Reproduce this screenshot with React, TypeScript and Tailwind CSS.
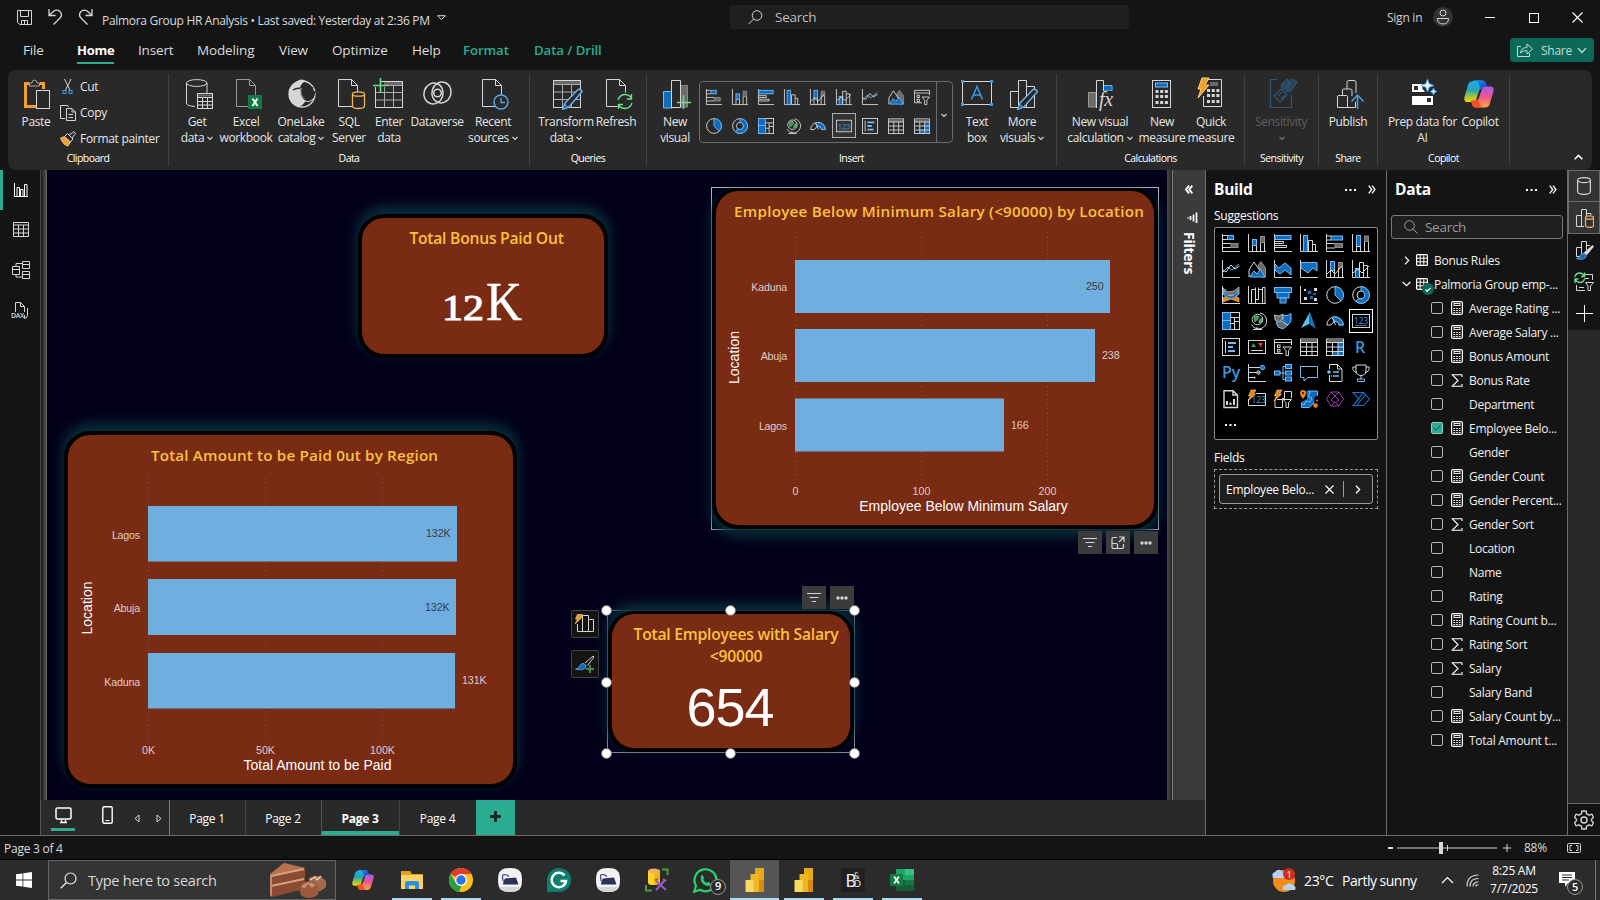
import React, { ReactNode } from "react";

const W = "#d6d6d6";
const B = "#0f6cbd";
const L = "#74b9f2";
const G = "#6a6a6a";

type SvgProps = { w: number; h?: number; vb?: string; children: ReactNode; className?: string };
const Svg = ({ w, h, vb, children, className }: SvgProps) => (
  <svg width={w} height={h ?? w} viewBox={vb ?? `0 0 ${w} ${h ?? w}`} fill="none" className={`block shrink-0 ${className ?? ""}`}>
    {children}
  </svg>
);

/* ---------- small visual-type icons, drawn on an 18x18 grid ---------- */
const axis = <path d="M.5 0V17.5H18" stroke={W} />;
const visual: Record<string, ReactNode> = {
  stackedBar: (
    <>
      {axis}
      <path d="M.5 1.500H5M.5 5.500H5M.5 9.500H9M.5 13.500H9" stroke={W} />
      <rect x="5.500" y="1.500" width="6" height="4" fill={B} stroke={L} />
      <rect x="9" y="9.500" width="7" height="4" fill={G} stroke="#8a8a8a" />
    </>
  ),
  stackedCol: (
    <>
      {axis}
      <path d="M4.500 17V11.500H8.500V17M12.500 17V8.500H16.500V17" stroke={W} />
      <rect x="4.500" y="5.500" width="4" height="6" fill={B} stroke={L} />
      <rect x="12.500" y="2.500" width="4" height="6" fill={G} stroke="#8a8a8a" />
    </>
  ),
  clusterBar: (
    <>
      {axis}
      <rect x="1" y="1.500" width="16" height="4" fill={B} stroke={L} />
      <path d="M1 9.500H9.500V7.500H1M1 13.500H12.500V11.500H1" stroke={W} />
    </>
  ),
  clusterCol: (
    <>
      {axis}
      <rect x="3.500" y="1.500" width="4" height="16" fill={B} stroke={L} />
      <path d="M8.500 17V6.500H12.500V17M12.500 10.500H15.500V17" stroke={W} />
    </>
  ),
  fullBar: (
    <>
      {axis}
      <rect x="5" y="2" width="11.500" height="4" fill={B} stroke={L} />
      <path d="M.5 2H5M.5 6H5M.5 9.500H9M.5 14H9" stroke={W} />
      <rect x="9" y="9.500" width="7.500" height="4" fill={G} stroke="#8a8a8a" />
    </>
  ),
  fullCol: (
    <>
      {axis}
      <rect x="4.500" y="1.500" width="4" height="11" fill={B} stroke={L} />
      <path d="M4.500 17V12.500H8.500V17M12.500 17V7.500H16.500V17" stroke={W} />
      <rect x="12.500" y="2" width="4" height="5.500" fill={G} stroke="#8a8a8a" />
    </>
  ),
  line: (
    <>
      {axis}
      <path d="M1 12L6 7L10 10L17 4" stroke={L} />
      <path d="M1 10L4 12L9 5L13 9L17.500 6" stroke={W} />
    </>
  ),
  area: (
    <>
      <path d="M10 5L13 1.500L17.500 8V17H14Z" fill={G} stroke="#8a8a8a" />
      <path d="M1 17V10L6 2L12 11" stroke={W} />
      <path d="M1.500 17L6 11L9 14L12.500 9L17 17Z" fill={B} stroke={L} />
    </>
  ),
  areaStack: (
    <>
      {axis}
      <path d="M1 4L5 8L11 3L17 8V15L11 10L6 14L1 10Z" fill={B} stroke={L} />
    </>
  ),
  area100: (
    <>
      {axis}
      <path d="M1 2.500H17V11L13 8L8 13L1 8Z" fill={B} stroke={L} />
    </>
  ),
  comboStack: (
    <>
      {axis}
      <rect x="4.500" y="1.500" width="4" height="9" fill={B} stroke={L} />
      <path d="M4.500 17V9.500M8.500 17V9.500M12.500 17V7.500H16.500V17" stroke={W} />
      <rect x="12.500" y="2.500" width="4" height="5" fill={G} stroke="#8a8a8a" />
      <path d="M1 14L5 10L9 14L16.500 5.500" stroke={W} />
    </>
  ),
  combo: (
    <>
      {axis}
      <rect x="3.500" y="8.500" width="4" height="9" fill={B} stroke={L} />
      <path d="M7.500 17V2.500H11.500V17M12 5.500H15.500V17" stroke={W} />
      <path d="M1 13L6 9L10 13L17 6" stroke={W} />
    </>
  ),
  ribbon: (
    <>
      <path d="M1 2L6 6L12 5L17 1V8L12 12L6 11L1 8Z" fill={G} stroke={W} strokeWidth=".7" />
      <path d="M1 12L6 9H12L17 12V16L9 13L1 16Z" fill="#e8811a" stroke="#ffc37a" strokeWidth=".6" />
      <path d="M2 4C5 12 12 12 16 4V8C12 14 6 14 2 8Z" fill={B} stroke={L} strokeWidth=".7" />
      <path d="M.5 0V17.500H18" stroke={W} />
    </>
  ),
  waterfall: (
    <>
      {axis}
      <path d="M3.500 17V3.500H7.500V17M7.500 1.500V13.500H10.500V1.500M10.500 3.500H14.500V1.500H17V17M14.500 3V17" stroke={W} />
    </>
  ),
  funnel: (
    <>
      <rect x=".5" y="1.500" width="17" height="5" fill={B} stroke={L} />
      <rect x="3" y="6.500" width="12" height="5.500" fill={B} stroke={L} />
      <rect x="6" y="12" width="6" height="5" fill={B} stroke={L} />
    </>
  ),
  scatter: (
    <>
      {axis}
      <path d="M4 11h3v3H4zM14 12h3v3h-3zM14 2h3v3h-3zM4 3h2v2H4z" fill={W} />
      <path d="M8 5h3v3H8zM10 10h3v3h-3zM13 7h3v2h-3z" fill={B} />
    </>
  ),
  pie: (
    <>
      <circle cx="9" cy="9" r="8.300" stroke={W} />
      <path d="M9 9V.7A8.300 8.300 0 0 1 14.800 15Z" fill={B} stroke={L} />
    </>
  ),
  donut: (
    <>
      <circle cx="9" cy="9" r="8.300" stroke={W} />
      <circle cx="9" cy="9" r="4" stroke={W} />
      <path d="M9 .7A8.300 8.300 0 1 1 4 15.500L6.500 12.300A4 4 0 1 0 9 5Z" fill={B} stroke={L} />
    </>
  ),
  treemap: (
    <>
      <rect x=".5" y=".5" width="17" height="17" stroke={W} />
      <rect x=".5" y=".5" width="8" height="8" fill={B} stroke={L} />
      <rect x=".5" y="8.500" width="8" height="9" fill={B} stroke={L} />
      <path d="M8.500 5.500H17.500M12.500 5.500V17.500M8.500 11.500H12.500M12.500 9.500H17.500" stroke={W} />
    </>
  ),
  globe: (
    <>
      <circle cx="9.500" cy="7.500" r="5.300" stroke={W} />
      <path d="M6 5Q8 3 10 4T9 8T6.500 9ZM11 8L14 6V10L11 11Z" fill="#3b9c5a" stroke="#9be0ae" strokeWidth=".5" />
      <path d="M12 1A8 8 0 1 1 3.500 12.500M9 15V17M5 17.500H14" stroke={W} />
    </>
  ),
  filledMap: (
    <>
      <path d="M.5 3L5 4L9 2L8 8L5 10L1 8Z" fill={G} stroke={W} strokeWidth=".8" />
      <path d="M9 3Q13 5 17 1.500V9L14 13L11 11L9 8Z" fill={B} stroke={L} />
      <path d="M2 10L8 9L11 12L14 13L9 17L4 15Z" fill={G} stroke={L} />
    </>
  ),
  azureMap: (
    <>
      <path d="M10 0L1 16L9 12Z" fill="#5cc3ea" />
      <path d="M10 0L16 17L9 12Z" fill="#1a73b8" />
    </>
  ),
  gauge: (
    <>
      <path d="M.8 13A8.200 8.200 0 0 1 17.200 13H13A4 4 0 0 0 8 9.500L5 13Z" stroke={W} />
      <path d="M6 5.500A8.200 8.200 0 0 1 17.200 13H13A4 4 0 0 0 8.500 9.200Z" fill={B} stroke={L} />
      <path d="M6.500 6.500L9.500 13" stroke={W} />
    </>
  ),
  card: (
    <>
      <rect x=".5" y="2.500" width="17" height="13" stroke={W} />
      <text x="9" y="12.300" textAnchor="middle" fontSize="8.500" fill="#3a9be8" fontFamily="Open Sans, sans-serif">123</text>
      <path d="M3 13.500H15" stroke={G} />
    </>
  ),
  multiRow: (
    <>
      <rect x=".5" y=".5" width="17" height="17" stroke={W} />
      <path d="M3.500 3V15" stroke={W} />
      <path d="M6 5H14M6 9H11M6 13H13" stroke={L} strokeWidth="2" />
    </>
  ),
  kpi: (
    <>
      <rect x=".5" y="2.500" width="17" height="13" stroke={W} />
      <path d="M3 9L5.500 5L8 9Z" fill="#2f9e4f" />
      <path d="M10 5H15L12.500 9.500Z" fill="#e33" />
      <path d="M3 12.500H15" stroke={W} />
    </>
  ),
  slicer: (
    <>
      <path d="M9 15.500H.5V1.500H17.500V7M.5 4.500H17.500" stroke={W} />
      <rect x="3.500" y="7" width="2.500" height="2.500" stroke={W} />
      <rect x="3.500" y="11.500" width="2.500" height="2.500" stroke={W} />
      <path d="M9 9H17.500L14.500 12.500V17.500H12V12.500Z" stroke={W} />
    </>
  ),
  table: (
    <>
      <rect x=".5" y="1" width="17" height="16.500" stroke={W} />
      <rect x="1" y="1.500" width="16" height="3" fill={G} />
      <path d="M.5 4.500H17.500M.5 9H17.500M.5 13.500H17.500M6.500 4.500V17.500M12 4.500V17.500" stroke={W} />
    </>
  ),
  matrix: (
    <>
      <path d="M12 5H17.500V17.500H6.500V13H12Z" fill={B} />
      <rect x=".5" y="1" width="17" height="16.500" stroke={W} />
      <rect x="1" y="1.500" width="16" height="3" fill={G} />
      <path d="M.5 4.500H17.500M.5 9H17.500M.5 13.500H17.500M6.500 4.500V17.500M12 4.500V17.500" stroke={W} />
    </>
  ),
  r: <text x="8" y="15" textAnchor="middle" fontSize="16" fontWeight="600" fill="#3a96dd" fontFamily="Open Sans, sans-serif">R</text>,
  py: <text x="9" y="14" textAnchor="middle" fontSize="16" fontWeight="600" fill="#3a96dd" fontFamily="Open Sans, sans-serif" letterSpacing="-.3">Py</text>,
  influencers: (
    <>
      {axis}
      <path d="M1 3.500H12M1 8.500H9M1 13.500H6" stroke={W} />
      <circle cx="14.500" cy="3.500" r="2.200" fill={B} stroke={L} />
      <circle cx="10.500" cy="8.500" r="1.700" fill={G} stroke={W} />
      <circle cx="6.500" cy="13.500" r="1" fill={W} />
    </>
  ),
  decomp: (
    <>
      <path d="M6 9H9V2.500H12M9 9H12M9 9V15.500H12" stroke={L} />
      <rect x=".5" y="7" width="5.500" height="4" fill={B} stroke={L} />
      <rect x="11.500" y=".5" width="6" height="4" fill={B} stroke={L} />
      <rect x="11.500" y="7" width="6" height="4" fill={B} stroke={L} />
      <rect x="11.500" y="13" width="6" height="4" fill={B} stroke={L} />
    </>
  ),
  qna: <path d="M.5 2.500H17.500V13.500H8L4 17V13.500H.5Z" stroke={L} />,
  narrative: (
    <>
      <path d="M3.500 5V.5H11.500L16 5V17.500H3.500V11M11.500 .5V5H16" stroke={W} />
      <circle cx="3" cy="8" r="1.800" fill={L} />
      <path d="M7 8H13M7 12H13M5 12H6" stroke={L} strokeWidth="1.300" />
    </>
  ),
  trophy: (
    <>
      <path d="M4 1H14V7Q14 11 9 11.500Q4 11 4 7ZM4 3H.8Q.5 8 5 8.500M14 3H17.200Q17.500 8 13 8.500M9 11.500V15" stroke={W} />
      <path d="M5.500 15H12.500V17.500H5.500Z" stroke={L} />
    </>
  ),
  paginated: (
    <>
      <path d="M2 .8H11L15.500 5V17.500H2ZM11 .8V5H15.500" stroke={W} strokeWidth="1.400" />
      <path d="M5 15V11M8.500 15V12.500M12 15V9" stroke={W} strokeWidth="2" />
    </>
  ),
  cardNew: (
    <>
      <path d="M6 15.500H.5V9M8 3.500H17.500V15.500H5" stroke={W} />
      <text x="10.500" y="13" textAnchor="middle" fontSize="8.500" fill="#3a9be8" fontFamily="Open Sans, sans-serif">123</text>
      <path d="M3 0H8L5.500 4H7.500L0 11L2.500 6H.5Z" fill="#e8811a" stroke="#ffd08a" strokeWidth=".6" />
    </>
  ),
  slicerNew: (
    <>
      <path d="M10.500 1.500H17.500V8M8 8.500H10.500V1.500M1 10V17.500H8.500V9.500H3M9 9.500H17.500L14.500 12.500V17.500H12V12.500Z" stroke={W} />
      <path d="M3 0H8L5.500 4H7.500L0 11L2.500 6H.5Z" fill="#e8811a" stroke="#ffd08a" strokeWidth=".6" />
    </>
  ),
  arcgis: (
    <>
      <path d="M6 1H17V5L14 8L15 12L10 17H1V12L7 9Z" fill={B} />
      <path d="M8 1L10 3L8 6L12 8L10 12L6 11L4 15L1.500 13V17.500H9L14 13M8 1H17.500V6" stroke={L} />
      <path d="M3 0A3 3 0 0 1 6 3Q6 6 3 9Q0 6 0 3A3 3 0 0 1 3 0Z" fill="#f08018" />
      <circle cx="3" cy="3" r="1.100" fill="#111" />
      <circle cx="15.500" cy="15.500" r="2.300" fill="#f08018" />
      <circle cx="17" cy="10.500" r="1" fill="#f08018" />
    </>
  ),
  powerApps: <path d="M5 2L9 6L13 2L17.500 9L13 16L9 12L5 16L.5 9ZM5 2H13M5 16H13M9 6L5 10L9 13L13 10Z" stroke="#9b3fb0" />,
  automate: <path d="M1 2.500H11.500L17.500 9L11.500 15.500H1L7 9ZM5 15L13.500 5M1 15.500L11.500 2.500" stroke="#1473d6" strokeWidth="1.100" />,
};
const V = ({ n, s = 18 }: { n: string; s?: number }) => (
  <Svg w={s} vb="0 0 18 18" className="overflow-visible">
    {visual[n]}
  </Svg>
);

const Chev = ({ c = W }: { c?: string }) => (
  <svg width="6" height="5" viewBox="0 0 6 5" fill="none" className="ml-[3px] inline-block align-[1px]">
    <path d="M.5 1L3 3.500L5.500 1" stroke={c} strokeWidth="1.100" />
  </svg>
);

const Copilot = ({ s, id }: { s: number; id: string }) => (
  <Svg w={s} h={s} vb="0 0 30 28">
    <defs>
      <linearGradient id={`${id}a`} x1="0" y1="0" x2="0" y2="1">
        <stop offset="0" stopColor="#18b5f0" />
        <stop offset=".45" stopColor="#2aa3b8" />
        <stop offset=".7" stopColor="#8bc34a" />
        <stop offset="1" stopColor="#ffd500" />
      </linearGradient>
      <linearGradient id={`${id}b`} x1="0" y1="0" x2="0" y2="1">
        <stop offset="0" stopColor="#a45bf0" />
        <stop offset=".5" stopColor="#f0568a" />
        <stop offset="1" stopColor="#ffa64d" />
      </linearGradient>
      <linearGradient id={`${id}c`} x1="0" y1="0" x2="1" y2="1">
        <stop offset="0" stopColor="#1592f0" />
        <stop offset="1" stopColor="#1b3bd0" />
      </linearGradient>
    </defs>
    <path d="M8 1.500Q9 .5 11 .5H18Q21 .5 22 4L23 8H19Q16 8 15 11L12 20Q11 22 8 22H4Q-.5 22 .5 17L4 5Q5 1.500 8 1.500Z" fill={`url(#${id}a)`} />
    <path d="M11 .5H18Q21 .5 22 4L23.500 8.500H19Q16 8.500 15 5Q14 1 11 .5Z" fill={`url(#${id}c)`} />
    <path d="M22 6.500H26Q30.500 6.500 29.500 11L26 23Q25 27.500 21 27.500H12Q9 27.500 8 24L7 20.500H11Q14 20.500 15 17.500L18 9Q19 6.500 22 6.500Z" fill={`url(#${id}b)`} />
    <path d="M7 20.500H12Q14 20.500 14.500 19Q15 27 20 27.500H12Q9 27.500 8 24Z" fill="#f4511e" />
  </Svg>
);

/* ---------- ribbon ---------- */
const page = "M3.500 .5H16.500L22.500 6.500V27.500H3.500ZM16.500 .5V6.500H22.500";
const big: Record<string, ReactNode> = {
  paste: (
    <>
      <path d="M6 4.500H2.500V27.500H13M17 4.500H20.500V10" stroke="#f0a030" strokeWidth="3" />
      <path d="M6.500 7V4H9Q9 1 11.500 1T14 4H16.500V7Z" stroke="#a9a9a9" fill="#292929" />
      <rect x="13.500" y="11.500" width="13" height="18" fill="#292929" stroke={W} />
    </>
  ),
  get: (
    <>
      <path d="M1.500 4V24Q1.500 27 10 27.500M22 4V14" stroke={W} />
      <ellipse cx="11.700" cy="4" rx="10.200" ry="3.400" stroke={W} />
      <rect x="12.500" y="14.500" width="15" height="15" fill="#292929" stroke={W} />
      <path d="M13 16.500H27" stroke={G} strokeWidth="2" />
      <path d="M12.500 18.500H27.500M12.500 22.500H27.500M12.500 26H27.500M17.500 18V29.500M22.500 18V29.500" stroke={W} />
    </>
  ),
  excel: (
    <>
      <path d={page} stroke="#999" />
      <rect x="15" y="16" width="14" height="14" fill="#107c41" />
      <path d="M19.500 19.500L24.500 27M24.500 19.500L19.500 27" stroke="#fff" strokeWidth="1.900" />
    </>
  ),
  onelake: (
    <>
      <circle cx="15" cy="15" r="13" stroke={W} strokeWidth="1.300" />
      <path d="M8 4Q14 -2 19 2Q14 4 13 9L15 16L19 21Q15 29 10 27Q1 24 2 13Q3 8 8 4Z" fill={W} />
      <path d="M14 8Q12 18 20 22Q27 20 28 12M6 11Q11 8 14 10M15 9Q20 6 26 9" stroke="#292929" strokeWidth="1.400" />
      <path d="M14 9Q12 17 18 22Q23 24 27 19" stroke={W} />
    </>
  ),
  sql: (
    <>
      <path d={page} stroke={W} />
      <path d="M17.500 15V27Q17.500 29.500 23.500 29.500T29.500 27V15" fill="#292929" stroke="#f2b45c" strokeWidth="1.300" />
      <ellipse cx="23.500" cy="15" rx="6" ry="2.200" fill="#292929" stroke="#f2b45c" strokeWidth="1.300" />
    </>
  ),
  enter: (
    <>
      <rect x="2.500" y="2.500" width="27" height="26" stroke={W} />
      <rect x="11" y="3" width="18" height="3" fill={G} />
      <path d="M9 6.500H29.500M2.500 13.500H29.500M2.500 21H29.500M11.500 8V28.500M20.500 6.500V28.500" stroke="#aaa" />
      <path d="M0 0H7V8H0Z" fill="#292929" />
      <path d="M0 6.500H15M7.500 -1V14" stroke="#6fe08a" strokeWidth="1.600" />
    </>
  ),
  dataverse: (
    <>
      <ellipse cx="11.500" cy="15.500" rx="9.500" ry="10.500" transform="rotate(18 11.500 15.500)" stroke={W} strokeWidth="1.500" />
      <ellipse cx="19.500" cy="14.500" rx="9.500" ry="10.500" transform="rotate(18 19.500 14.500)" stroke={W} strokeWidth="1.500" />
      <circle cx="15.500" cy="15" r="3.800" stroke={W} strokeWidth="1.500" />
    </>
  ),
  recent: (
    <>
      <path d={page} stroke={W} />
      <circle cx="22" cy="23" r="7" fill="#292929" stroke="#5aa9e6" strokeWidth="1.400" />
      <path d="M22 18.500V23.500H26" stroke="#5aa9e6" strokeWidth="1.300" />
    </>
  ),
  transform: (
    <>
      <rect x="1.500" y="1.500" width="27" height="27" stroke={W} />
      <rect x="2" y="2" width="26" height="3.500" fill={G} />
      <path d="M1.500 5.500H28.500M1.500 13H28.500M1.500 20.500H28.500M10.500 5.500V28.500M19.500 5.500V28.500" stroke="#aaa" />
      <path d="M11 30L13 24L26 10.500Q29 9.500 30 12.500L17 28Z" fill="#292929" stroke={L} strokeWidth="1.400" />
      <path d="M10.500 30.500L12.500 25L16 28.500Z" fill={B} stroke={L} />
    </>
  ),
  refresh: (
    <>
      <path d={page} stroke={W} />
      <circle cx="22" cy="22.500" r="9" fill="#292929" />
      <path d="M15 21Q17 15.500 22 15.500Q26 15.500 28.500 19M28.500 15V20H24M29 24Q27 29.500 22 29.500Q18 29.500 15.500 26M15.500 30V25.500H20" stroke="#6fe08a" strokeWidth="1.400" />
    </>
  ),
  newVisual: (
    <>
      <path d="M1.500 29V12.500H10.500V29Z" fill={B} stroke={L} />
      <path d="M18 6.500H25.500V28H18Z" fill={G} stroke="#888" />
      <path d="M9.500 28.500V1.500H18.500V28.500Z" fill="#292929" stroke={W} />
      <path d="M21.500 16V30M15 23.500H29" stroke="#6fe08a" strokeWidth="1.500" />
    </>
  ),
  textBox: (
    <>
      <rect x="1.500" y="3.500" width="29" height="23" stroke={W} />
      <path d="M0 2h3v3H0zM29 2h3v3h-3zM0 25h3v3H0zM29 25h3v3h-3z" fill="#3a9be8" />
      <path d="M10.500 21.500L16 8.500L21.500 21.500M12.500 17H19.500" stroke="#3a9be8" strokeWidth="1.500" />
    </>
  ),
  moreVisuals: (
    <>
      <path d="M1.500 28.500V12.500H9.500V28.500ZM9.500 28.500V1.500H17.500V28.500ZM17.500 7.500H25.500V28.500H10" stroke={W} />
      <path d="M9 30L11 24L24 10.500Q27 9.500 28.500 12.500L15 28Z" fill="#292929" stroke={L} strokeWidth="1.400" />
      <path d="M8.500 30.500L10.500 25L14 28.500Z" fill={B} stroke={L} />
    </>
  ),
  newCalc: (
    <>
      <path d="M3.500 28V13.500H11V28Z" fill={G} stroke="#999" />
      <path d="M18 6.500H27V12H18Z" fill={B} stroke={L} />
      <path d="M11.500 29V1.500H18.500V29" fill="#292929" stroke={W} />
      <path d="M16 12H32V32H16Z" fill="#292929" />
      <text x="14" y="27" fontSize="20" fontStyle="italic" fill={W} fontFamily="Liberation Serif, serif">fx</text>
    </>
  ),
  measure: (
    <>
      <rect x="6.500" y="1.500" width="18" height="27" stroke={W} />
      <rect x="9.500" y="4" width="12" height="4" fill={B} stroke={L} />
      <path d="M9.500 12.500H22M9.500 17.500H22M9.500 23.500H22" stroke={W} strokeWidth="3" strokeDasharray="3 1.700" />
    </>
  ),
  quick: (
    <>
      <path d="M12 1.500H26.500V28.500H8.500V18" stroke={W} />
      <rect x="15" y="4" width="8" height="4" fill={G} />
      <path d="M12 12.500H25M12 17.500H25M12 23.500H25" stroke={W} strokeWidth="3" strokeDasharray="3 1.700" />
      <path d="M7 0H14L10 7H14L3 20L6 11H3Z" fill="#ef9f22" stroke="#ffd08a" />
    </>
  ),
  sensitivity: (
    <g stroke="#2f5673" strokeWidth="1.200">
      <path d="M12 1.500H5.500V29.500H26.500V17" />
      <path d="M9 18L16 11L22 17L15 24ZM13 18L17 14M16 21L20 17" />
      <path d="M16 8L22 1L25 4L19 12ZM24 7L27 1L32 4L26 13L21 14Z" fill="#27465c" />
    </g>
  ),
  publish: (
    <>
      <path d="M2.500 28.500V17.500Q2.500 16.500 4 16.500H7.500V11Q7.500 10 8.500 10H12V3.500Q12 1.500 14 1.500H19Q21 1.500 21 3.500V14M7.500 16.500H11.500Q12.500 16.500 12.500 17.500V28.500M12 10H15.500Q17 10 17 12V17M2.500 28.500H20.500V23" stroke={W} />
      <path d="M22.500 30V17M16.500 22.500L22.500 16L28.500 22.500" stroke="#4ba0e0" strokeWidth="1.500" />
    </>
  ),
  prep: (
    <>
      <path d="M5 5H18L15 9L18 13H5ZM5 17H26V26H5Z" fill="#fff" />
      <path d="M7 7H11V11H7ZM20 19H24V23H20Z" fill="#333" />
      <path d="M20.500 0L22.300 4.700L27 6.500L22.300 8.300L20.500 13L18.700 8.300L14 6.500L18.700 4.700ZM26.500 9L27.600 11.400L30 12.500L27.600 13.600L26.500 16L25.400 13.600L23 12.500L25.400 11.400Z" fill="#e8f4fc" stroke="#3a9be8" strokeWidth=".9" />
    </>
  ),
};
/* view boxes that nudge each drawing inside its 32px cell */
const bigVb: Record<string, string> = {
  paste: "-3 -1 32 32", get: "-4 -1 32 32", excel: "-3 -1 32 32", onelake: "-2 -1 32 32", sql: "-2 -1 32 32",
  enter: "0 -1 32 32", dataverse: "-1 0 32 32", recent: "-2 -1 32 32", transform: "-2 -1 32 32", refresh: "-3 -1 32 32",
  newVisual: "-3 -1 32 32", textBox: "0 0 32 32", moreVisuals: "-3 -1 32 32", newCalc: "-1 -1 32 32", measure: "0 -1 32 32",
  quick: "0 0 32 32", sensitivity: "0 0 32 32", publish: "-3 -1 32 32", prep: "0 -1 32 32",
};

type BtnProps = { icon: string; w: string; a: string; b?: string; drop?: boolean; off?: boolean };
const Btn = ({ icon, w, a, b, drop, off }: BtnProps) => (
  <div className={`flex shrink-0 flex-col items-center whitespace-nowrap ${w} ${off ? "text-[#5e5e5e]" : "text-[#e6e6e6]"}`}>
    <div className="mb-[4px] flex h-[33px] w-[32px] items-end justify-center">
      {icon === "copilot" ? (
        <div className="mb-px mr-[2px]"><Copilot s={30} id="cr" /></div>
      ) : (
        <Svg w={32} vb={bigVb[icon]} className="overflow-visible">{big[icon]}</Svg>
      )}
    </div>
    <div className="text-center text-[12px] leading-[16px] tracking-[-0.35px]">
      {a}
      {(b !== undefined || off) && <br />}
      {b}
      {drop && <Chev c={off ? "#777" : W} />}
    </div>
  </div>
);

const Group = ({ label, w, children, pad = "" }: { label: string; w: string; children: ReactNode; pad?: string }) => (
  <div className={`flex h-[92px] shrink-0 flex-col border-r border-[#414141] ${w}`}>
    <div className={`flex h-[74px] shrink-0 pt-[3px] ${pad}`}>{children}</div>
    <div className="text-center text-[10.5px] font-medium leading-[21px] tracking-[-0.55px] text-white">{label}</div>
  </div>
);

const gallery = [
  ["stackedBar", "stackedCol", "clusterBar", "clusterCol", "comboStack", "combo", "line", "area", "slicer"],
  ["pie", "donut", "treemap", "globe", "gauge", "card", "multiRow", "table", "matrix"],
];

const Ribbon = () => (
  <div className="mx-[8px] flex h-[100px] shrink-0 rounded-[8px] bg-[#292929] pt-[4px]">
    <Group label="Clipboard" w="w-[161px]" pad="pl-[10px]">
      <Btn icon="paste" w="w-[36px]" a="Paste" />
      <div className="-mt-[3px] ml-[6px] flex flex-col text-[12px] leading-[26px] tracking-[-0.3px] text-[#e6e6e6]">
        <div className="flex h-[26px] items-center gap-[4px]">
          <Svg w={16}>
            <path d="M4.500 0L10 11M11 0L5.500 11" stroke={W} />
            <rect x="3" y="11.500" width="3" height="3" stroke="#3a9be8" /><rect x="9" y="11.500" width="3" height="3" stroke="#3a9be8" />
          </Svg>
          Cut
        </div>
        <div className="flex h-[26px] items-center gap-[4px]">
          <Svg w={16}>
            <path d="M5 13.500H.5V.5H7.500L9 2" stroke={W} />
            <path d="M6.500 3.500H12L15.500 7V15.500H6.500ZM12 3.500V7H15.500M8.500 9.500H13M8.500 12.500H13" stroke={W} />
          </Svg>
          Copy
        </div>
        <div className="flex h-[26px] items-center gap-[4px]">
          <Svg w={16}>
            <path d="M.5 7L6 5L11 10L8 15Q3 14 .5 7Z" fill="#f0a030" stroke="#ffd08a" strokeWidth=".8" />
            <path d="M4.500 5.500L7.500 2.500L13 8L10.500 11ZM9 4L14 .8L15.500 2.500L12 7" fill="#292929" stroke={W} />
          </Svg>
          Format painter
        </div>
      </div>
    </Group>
    <Group label="Data" w="w-[361px]" pad="pl-[4px]">
      <Btn icon="get" w="w-[48px]" a="Get" b="data" drop />
      <Btn icon="excel" w="w-[50px]" a="Excel" b="workbook" />
      <Btn icon="onelake" w="w-[60px]" a="OneLake" b="catalog" drop />
      <Btn icon="sql" w="w-[36px]" a="SQL" b="Server" />
      <Btn icon="enter" w="w-[44px]" a="Enter" b="data" />
      <Btn icon="dataverse" w="w-[52px]" a="Dataverse" />
      <Btn icon="recent" w="w-[60px]" a="Recent" b="sources" drop />
    </Group>
    <Group label="Queries" w="w-[117px]" pad="pl-[5px]">
      <Btn icon="transform" w="w-[62px]" a="Transform" b="data" drop />
      <Btn icon="refresh" w="w-[38px]" a="Refresh" />
    </Group>
    <Group label="Insert" w="w-[410px]" pad="pl-[8px]">
      <Btn icon="newVisual" w="w-[40px]" a="New" b="visual" />
      <div className="ml-[4px] mt-[4px] flex h-[62px] w-[254px] rounded-[4px] border border-[#6b6b6b]">
        <div className="flex flex-1 flex-col pl-px">
          {gallery.map((row, i) => (
            <div key={i} className="flex h-[29px]">
              {row.map((n) => (
                <div key={n} className="flex w-[26px] items-center justify-center">
                  <div className={n === "card" ? "flex h-[25px] w-[24px] items-center justify-center border border-[#b0b0b0] bg-[#333]" : ""}>
                    <V n={n} s={16} />
                  </div>
                </div>
              ))}
            </div>
          ))}
        </div>
        <div className="flex w-[16px] items-center justify-center border-l border-[#6b6b6b] pr-[4px] pt-[7px]">
          <Chev />
        </div>
      </div>
      <div className="w-[4px]" />
      <Btn icon="textBox" w="w-[40px]" a="Text" b="box" />
      <Btn icon="moreVisuals" w="w-[50px]" a="More" b="visuals" drop />
    </Group>
    <Group label="Calculations" w="w-[188px]" pad="pl-[7px]">
      <Btn icon="newCalc" w="w-[72px]" a="New visual" b="calculation" drop />
      <Btn icon="measure" w="w-[52px]" a="New" b="measure" />
      <Btn icon="quick" w="w-[46px]" a="Quick" b="measure" />
    </Group>
    <Group label="Sensitivity" w="w-[74px]">
      <Btn icon="sensitivity" w="w-[72px]" a="Sensitivity" drop off />
    </Group>
    <Group label="Share" w="w-[59px]">
      <Btn icon="publish" w="w-[58px]" a="Publish" />
    </Group>
    <Group label="Copilot" w="w-[132px]" pad="pl-[7px]">
      <Btn icon="prep" w="w-[75px]" a="Prep data for" b="AI" />
      <Btn icon="copilot" w="w-[40px]" a="Copilot" />
    </Group>
    <div className="flex flex-1 items-end justify-end pb-[10px] pr-[9px]">
      <Svg w={9} h={6}><path d="M.7 5.200L4.500 1.400L8.300 5.200" stroke="#fff" strokeWidth="1.500" /></Svg>
    </div>
  </div>
);

/* ---------- title bar and tabs ---------- */
const TitleBar = () => (
  <div className="flex h-[36px] shrink-0 items-center text-[12px] text-[#dcdcdc]">
    <div className="flex w-[730px] items-center pl-[17px]">
      <Svg w={15} className="mb-[1px]"><path d="M.5 .5H14.500V14.500H3L.5 12.500ZM3.500 .5V6.500H11.500V.5M4.500 14V10.500H10.500V14.500M7.500 11V14" stroke={W} /></Svg>
      <Svg w={15} h={16} className="mb-[2px] ml-[16px]"><path d="M1 0V6.500H7.500M1.500 6L5.500 2.200Q9 0 12 2.500Q15 6 12 9L5.500 15.500" stroke={W} strokeWidth="1.300" /></Svg>
      <Svg w={15} h={16} className="mb-[2px] ml-[15px]"><path d="M14 0V6.500H7.500M13.500 6L9.500 2.200Q6 0 3 2.500Q0 6 3 9L9.500 15.500" stroke={W} strokeWidth="1.300" /></Svg>
      <span className="ml-[9px] mt-[5px] whitespace-nowrap leading-[16px] tracking-[-0.3px]">Palmora Group HR Analysis • Last saved: Yesterday at 2:36 PM</span>
      <Svg w={9} h={6} className="ml-[7px]"><path d="M.7 .7H8.300L4.500 4.700Z" stroke={W} /></Svg>
    </div>
    <div className="mb-[2px] flex h-[24px] w-[399px] items-center rounded-[2px] bg-[#1f1f1f] pl-[18px] text-[13.5px] text-[#bdbdbd]">
      <Svg w={15}><circle cx="9" cy="5.500" r="4.800" stroke={W} /><path d="M5.500 9L.7 14" stroke={W} /></Svg>
      <span className="ml-[12px]">Search</span>
    </div>
    <div className="mb-[2px] flex flex-1 items-center">
      <span className="ml-[258px] pt-px text-[#d0d0d0]">Sign in</span>
      <div className="ml-[11px] flex h-[20px] w-[20px] items-center justify-center rounded-full bg-[#333]">
        <Svg w={14} h={16}><circle cx="7" cy="4" r="3" stroke={W} /><path d="M1.500 9.500H12.500Q12.500 15 7 15T1.500 9.500Z" stroke={W} /></Svg>
      </div>
      <Svg w={10} className="ml-[32px]"><path d="M0 5.500H10" stroke="#fff" /></Svg>
      <Svg w={10} className="ml-[34px] mt-[1px]"><rect x=".5" y=".5" width="9" height="9" stroke="#fff" /></Svg>
      <Svg w={11} className="ml-[33px] mt-[1px]"><path d="M.5 .5L10.500 10.500M10.500 .5L.5 10.500" stroke="#fff" strokeWidth="1.100" /></Svg>
    </div>
  </div>
);

const tabs: [string, string][] = [
  ["File", "w-[54px]"], ["Home", "w-[61px]"], ["Insert", "w-[59px]"], ["Modeling", "w-[82px]"], ["View", "w-[53px]"],
  ["Optimize", "w-[80px]"], ["Help", "w-[51px]"], ["Format", "w-[71px]"], ["Data / Drill", "w-[90px]"],
];
const Tabs = () => (
  <div className="flex h-[34px] shrink-0 items-start pl-[23px] text-[13.5px]">
    {tabs.map(([t, w], i) => (
      <div key={t} className={`${w} h-[30px] pt-[5px] leading-[18px]`}>
        <span className={i === 1 ? "inline-block h-[23px] border-b-[2px] border-[#2bac93] text-[13px] font-bold text-white" : i > 6 ? "text-[13.25px] font-semibold tracking-[-0.1px] text-[#2bac93]" : "tracking-[-0.15px] text-[#dcdcdc]"}>{t}</span>
      </div>
    ))}
    <div className="ml-auto mr-[6px] mt-[2px] flex h-[24px] w-[84px] items-center rounded-[4px] bg-[#0c695a] pl-[7px] text-[12px] text-[#c4dcd6]">
      <Svg w={16} h={15}><path d="M4 3.500H.5V13.500H12.500V10M3.500 10Q4 4.500 10 4.500V1L15.500 6L10 11V7.500Q5.500 7.500 3.500 10Z" stroke="#c4dcd6" /></Svg>
      <span className="ml-[8px] pt-px">Share</span>
      <Svg w={10} h={7} className="ml-[5px]"><path d="M1 1L5 5.500L9 1" stroke="#c4dcd6" strokeWidth="1.200" /></Svg>
    </div>
  </div>
);

/* ---------- report canvas ---------- */
const arial = "Liberation Sans, Arial, sans-serif";
type BarDatum = { name: string; label: string; y: number; h: number; end: number; inside: boolean };
type BarChartProps = {
  x0: number; bars: BarDatum[]; ticks: [number, string][]; gridY: [number, number]; tickY: number;
  title: string; titleX: number; titleY: number; yX: number; yY: number; head: string; headX: number; headY: number; headLen: number;
};
const BarChart = (p: BarChartProps) => (
  <g fontFamily={arial} letterSpacing="0">
    <text x={p.headX} y={p.headY} fontFamily="Open Sans, sans-serif" fontSize="15.200" fontWeight="600" fill="#fbc23a" textLength={p.headLen}>{p.head}</text>
    {p.ticks.map(([x, t]) => (
      <g key={t}>
        <path d={`M${x + 0.5} ${p.gridY[0]}V${p.gridY[1]}`} stroke="#8a5a4a" strokeDasharray="1 3.400" />
        <text x={x + 0.5} y={p.tickY} textAnchor="middle" fontSize="10.700" fill="#dccdc8">{t}</text>
      </g>
    ))}
    {p.bars.map((b) => (
      <g key={b.name}>
        <rect x={p.x0} y={b.y} width={b.end - p.x0} height={b.h} fill="#70aee0" />
        <text x={p.x0 - 8} y={b.y + b.h / 2 + 4.8} textAnchor="end" fontSize="10.700" letterSpacing="-.2" fill="#dccdc8">{b.name}</text>
        <text x={b.inside ? b.end - 6.5 : b.end + 7} y={b.y + b.h / 2 + 3.5} textAnchor={b.inside ? "end" : "start"} fontSize="10.700" letterSpacing="-.1" fill={b.inside ? "#333d47" : "#dccdc8"}>{b.label}</text>
      </g>
    ))}
    <text x={p.titleX} y={p.titleY} textAnchor="middle" fontSize="14" fill="#fff">{p.title}</text>
    <text transform={`translate(${p.yX} ${p.yY}) rotate(-90)`} textAnchor="middle" fontSize="14" fill="#fff">Location</text>
  </g>
);

const FilterGlyph = () => <Svg w={14} h={10}><path d="M0 .5H14M2.500 4.500H11.500M5 8.500H9" stroke={W} /></Svg>;
const DotsGlyph = () => <Svg w={12} h={4}><circle cx="2" cy="2" r="1.700" fill={W} /><circle cx="6" cy="2" r="1.700" fill={W} /><circle cx="10" cy="2" r="1.700" fill={W} /></Svg>;
const Hdr = ({ children }: { children: ReactNode }) => (
  <div className="flex h-[23px] w-[24px] items-center justify-center bg-[#3b3b3b]">{children}</div>
);

const handles = ["left-[-7px] top-[-6px]", "left-[117px] top-[-6px]", "left-[241px] top-[-6px]", "left-[-7px] top-[66px]", "left-[241px] top-[66px]", "left-[-7px] top-[137px]", "left-[117px] top-[137px]", "left-[241px] top-[137px]"];

const Canvas = () => (
  <div className="relative h-[630px] w-[1120px] shrink-0 overflow-hidden bg-[#03001a]">
    {/* Bonus card */}
    <div className="absolute left-[311px] top-[44px] h-[144px] w-[250px] rounded-[26px] border-[4px] border-black bg-[#7a2b14] shadow-[0_-6px_12px_2px_#082c38]">
      <div className="pt-[9px] pl-[7px] text-center text-[15.7px] font-semibold leading-[22px] text-[#fbc23a]">Total Bonus Paid Out</div>
      <div className="mt-[25px] flex justify-center">
        <svg width="80" height="48" viewBox="0 0 80 48" fill="#fff" stroke="#fff" fontFamily="Liberation Serif, serif" letterSpacing="0" className="overflow-visible">
          <text x="-1" y="45.500" fontSize="35" strokeWidth="1" textLength="42" lengthAdjust="spacingAndGlyphs">12</text>
          <text x="43" y="46" fontSize="54" strokeWidth=".4" textLength="36" lengthAdjust="spacingAndGlyphs">K</text>
        </svg>
      </div>
    </div>

    {/* Salary by location chart */}
    <div className="absolute left-[664px] top-[17px] h-[343px] w-[448px] border border-[#b5b5b5]">
      <div className="h-[341px] w-[446px] rounded-[26px] border-[4px] border-t-[3px] border-black bg-[#7a2b14] shadow-[0_6px_12px_2px_#082c38]" />
      <svg className="absolute left-0 top-0" width="446" height="341" viewBox="712 188 446 341">
        <BarChart
          x0={795} gridY={[232, 483]} tickY={495} titleX={963.5} titleY={511} yX={739} yY={357.5}
          head="Employee Below Minimum Salary (<90000) by Location" headX={734} headY={216.5} headLen={410}
          title="Employee Below Minimum Salary"
          ticks={[[795, "0"], [921, "100"], [1047, "200"]]}
          bars={[
            { name: "Kaduna", label: "250", y: 260, h: 53, end: 1110, inside: true },
            { name: "Abuja", label: "238", y: 329, h: 53, end: 1095, inside: false },
            { name: "Lagos", label: "166", y: 398.5, h: 53, end: 1004, inside: false },
          ]}
        />
      </svg>
    </div>
    <div className="absolute left-[1031px] top-[361px] flex gap-[4px]">
      <Hdr><FilterGlyph /></Hdr>
      <Hdr><Svg w={14} h={13}><path d="M6 1.500H2.500Q1 1.500 1 3V11Q1 12.500 2.500 12.500H11Q12.500 12.500 12.500 11V8M8 1H13V6M13 1L8 6M1 7.500H5Q6.500 7.500 6.500 9V12.500" stroke={W} strokeWidth="1.200" /></Svg></Hdr>
      <Hdr><DotsGlyph /></Hdr>
    </div>

    {/* Amount by region chart */}
    <div className="absolute left-[17px] top-[261px] h-[357px] w-[453px] rounded-[26px] border-[4px] border-black bg-[#7a2b14] shadow-[0_-6px_12px_2px_#082c38]">
      <svg width="445" height="349" viewBox="68 435 445 349" className="block">
        <BarChart
          x0={148} gridY={[478, 741]} tickY={754} titleX={317.5} titleY={770} yX={92} yY={608}
          head="Total Amount to be Paid 0ut by Region" headX={151} headY={461} headLen={287}
          title="Total Amount to be Paid"
          ticks={[[148, "0K"], [265, "50K"], [382, "100K"]]}
          bars={[
            { name: "Lagos", label: "132K", y: 506, h: 55.5, end: 457, inside: true },
            { name: "Abuja", label: "132K", y: 579, h: 56, end: 456, inside: true },
            { name: "Kaduna", label: "131K", y: 653, h: 55.5, end: 455, inside: false },
          ]}
        />
      </svg>
    </div>

    {/* Selected card with its toolbars; the resize handles lie on top */}
    <div className="absolute left-[755px] top-[416px] z-10 flex gap-[4px]">
      <Hdr><FilterGlyph /></Hdr>
      <Hdr><DotsGlyph /></Hdr>
    </div>
    <div className="absolute left-[560px] top-[440px] h-[143px] w-[248px] border border-[#8a8a8a]">
      <div className="h-[141px] w-[246px] rounded-[26px] border-[4px] border-t-[3px] border-black bg-[#7a2b14] shadow-[0_-6px_12px_2px_#082c38]">
        <div className="pt-[9px] pl-[10px] text-center text-[15.7px] font-semibold leading-[22px] text-[#fbc23a]">Total Employees with Salary<br />&lt;90000</div>
        <div className="mr-[2px] mt-[13px] text-center text-[54px] leading-[54px] tracking-[-1px] text-white [font-family:'Liberation_Sans',sans-serif]">654</div>
      </div>
      {handles.map((h) => (
        <div key={h} className={`absolute z-20 h-[11px] w-[11px] rounded-full border border-[#666] bg-white ${h}`} />
      ))}
    </div>
    <div className="absolute left-[524px] top-[440px] flex flex-col gap-[12px]">
      <div className="flex h-[28px] w-[28px] items-center justify-center rounded-[2px] border border-[#444] bg-[#141414]">
        <Svg w={20}>
          <path d="M2.500 17.500V10M2.500 17.500H18.500V5.500H13.500V17M7.500 17V1.500H13.500V5" stroke={W} />
          <path d="M3 -1H8L6 3H7.500L0 10L2.500 5H.5Z" fill="#e89a2a" stroke="#ffd08a" strokeWidth=".6" />
        </Svg>
      </div>
      <div className="flex h-[28px] w-[28px] items-center justify-center rounded-[2px] border border-[#444] bg-[#141414]">
        <Svg w={20}>
          <path d="M10 9L18 2L19 3L12.500 11.500" stroke={W} />
          <path d="M.5 15Q4 15 4.500 12Q6 9 9 9.500Q12 11 10.500 14Q7 17 .5 15Z" fill={B} stroke={L} strokeWidth=".7" />
          <path d="M15 11V19M11 15H19" stroke="#3f8a4a" strokeWidth="2" />
        </Svg>
      </div>
    </div>
  </div>
);

/* ---------- side panes ---------- */
const LeftRail = () => (
  <div className="flex w-[40px] shrink-0 flex-col bg-[#141414]">
    <div className="flex h-[40px] items-center justify-center border-l-[3px] border-[#2bac93] pr-[2px]">
      <Svg w={14}><path d="M.5 0V13.500H14M3 13V4.500H5.500V13M6.500 13V6.500H9V13M10.500 13V1.500H13V13" stroke="#fff" /></Svg>
    </div>
    <div className="flex h-[39px] items-center justify-center pl-[2px]">
      <Svg w={16} h={15}><path d="M.5 .5H15.500V14.500H.5ZM.5 3H15.500M.5 7H15.500M.5 11H15.500M5.500 3V14.500M10.500 3V14.500" stroke={W} /></Svg>
    </div>
    <div className="flex h-[42px] items-center justify-center pl-[2px]">
      <Svg w={18}><path d="M.5 5.500H7.500V13.500H.5ZM.5 8.500H7.500M10.500 .5H17.500V7.500H10.500ZM10.500 3.500H17.500M10.500 10.500H17.500V17.500H10.500ZM10.500 13.500H17.500M4 5V2.500H10M4 14V16H10" stroke={W} /></Svg>
    </div>
    <div className="flex h-[39px] items-center justify-center">
      <Svg w={18} h={17}>
        <path d="M4.500 10V.5H9.500L13.500 4.500V10M9.500 .5V4.500H13.500M13.500 13V16.500Q16.500 16 16.500 13V6" stroke={W} />
        <text x="0" y="16" fontSize="7" fontWeight="600" fill={W} textLength="13" fontFamily="Open Sans, sans-serif">DAX</text>
      </Svg>
    </div>
  </div>
);

const Dots = () => <Svg w={11} h={3}><path d="M0 1h2v2H0zM4.500 1h2v2h-2zM9 1h2v2H9z" fill="#fff" /></Svg>;
const Dbl = ({ flip, w = 1.3 }: { flip?: boolean; w?: number }) => (
  <Svg w={8} h={9} className={flip ? "rotate-180" : ""}><path d="M.7 .7L3.700 4.500L.7 8.300M4 .7L7 4.500L4 8.300" stroke="#fff" strokeWidth={w} /></Svg>
);

const buildIcons = [
  "stackedBar", "stackedCol", "clusterBar", "clusterCol", "fullBar", "fullCol",
  "line", "area", "areaStack", "area100", "comboStack", "combo",
  "ribbon", "waterfall", "funnel", "scatter", "pie", "donut",
  "treemap", "globe", "filledMap", "azureMap", "gauge", "card",
  "multiRow", "kpi", "slicer", "table", "matrix", "r",
  "py", "influencers", "decomp", "qna", "narrative", "trophy",
  "paginated", "cardNew", "slicerNew", "arcgis", "powerApps", "automate",
];

const BuildPane = () => (
  <div className="flex w-[181px] shrink-0 flex-col border-r border-[#6b6b6b] bg-[#141414] pl-[8px] text-[12px] text-white">
    <div className="flex h-[38px] items-center pr-[10px]">
      <span className="pt-[2px] text-[15.5px] font-bold">Build</span>
      <div className="ml-auto flex items-center gap-[12px]"><Dots /><Dbl /></div>
    </div>
    <div className="h-[19px] leading-[16px]">Suggestions</div>
    <div className="h-[213px] w-[164px] rounded-[2px] border border-[#8a8a8a] bg-black pl-[3px] pt-[2px]">
      <div className="grid grid-cols-[repeat(6,26px)] auto-rows-[26px]">
        {buildIcons.map((n) => (
          <div key={n} className="flex items-center justify-center">
            <div className={n === "card" ? "flex h-[24px] w-[24px] items-center justify-center border border-white" : ""}><V n={n} s={18} /></div>
          </div>
        ))}
        <div className="flex items-center justify-center pr-px pb-[2px]"><Dots /></div>
      </div>
    </div>
    <div className="mt-[9px] h-[20px] leading-[18px]">Fields</div>
    <div className="h-[40px] w-[164px] border border-dashed border-[#9a9a9a] p-[4px]">
      <div className="flex h-[30px] items-center rounded-[3px] border border-[#9a9a9a] bg-[#1f1f1f] pl-[6px] pr-[11px]">
        <span className="whitespace-nowrap pt-px">Employee Belo...</span>
        <Svg w={9} className="ml-auto"><path d="M.5 .5L8.500 8.500M8.500 .5L.5 8.500" stroke="#fff" strokeWidth="1.100" /></Svg>
        <div className="ml-[9px] h-[16px] w-px bg-[#9a9a9a]" />
        <Svg w={6} h={9} className="ml-[11px]"><path d="M1 .7L4.700 4.500L1 8.300" stroke="#fff" strokeWidth="1.300" /></Svg>
      </div>
    </div>
  </div>
);

const fields: [string, string][] = [
  ["Average Rating ...", "c"], ["Average Salary ...", "c"], ["Bonus Amount", "c"], ["Bonus Rate", "s"], ["Department", ""],
  ["Employee Belo...", "c"], ["Gender", ""], ["Gender Count", "c"], ["Gender Percent...", "c"], ["Gender Sort", "s"],
  ["Location", ""], ["Name", ""], ["Rating", ""], ["Rating Count b...", "c"], ["Rating Sort", "s"], ["Salary", "s"],
  ["Salary Band", ""], ["Salary Count by...", "c"], ["Total Amount t...", "c"],
];
const TableGlyph = () => <Svg w={12}><rect x=".6" y=".6" width="10.800" height="10.800" rx="1" stroke="#fff" strokeWidth="1.200" /><path d="M.6 4.200H11.400M.6 7.800H11.400M4.200 .6V11.400M7.800 .6V11.400" stroke="#fff" /></Svg>;
const CalcGlyph = () => (
  <Svg w={12} h={14}>
    <rect x=".6" y=".6" width="10.800" height="12.800" rx="1.500" stroke="#fff" strokeWidth="1.200" />
    <rect x="3" y="2.500" width="6" height="2" stroke="#fff" strokeWidth=".9" />
    <path d="M2.500 7.500H10M2.500 9.500H10M2.500 11.500H10" stroke="#fff" strokeWidth="1.200" strokeDasharray="1.600 1.100" />
  </Svg>
);
const SigmaGlyph = () => <Svg w={12} h={13}><path d="M11 3V.7H1.200L7 6.500L1.200 12.300H11V10" stroke="#fff" strokeWidth="1.100" /></Svg>;

const DataPane = () => (
  <div className="flex w-[181px] shrink-0 flex-col border-r border-[#6b6b6b] bg-[#141414] text-[12px] tracking-[-0.28px] text-[#f0f0f0]">
    <div className="flex h-[38px] items-center pl-[8px] pr-[10px]">
      <span className="pt-[2px] text-[15.5px] font-bold text-white">Data</span>
      <div className="ml-auto flex items-center gap-[12px]"><Dots /><Dbl /></div>
    </div>
    <div className="ml-[4px] mt-[7px] flex h-[24px] w-[172px] items-center rounded-[3px] border border-[#7a7a7a] bg-[#1f1f1f] pl-[12px] text-[13.5px] text-[#9a9a9a]">
      <Svg w={14}><circle cx="5.500" cy="5.500" r="4.800" stroke="#a0a0a0" /><path d="M9 9L13.500 13.500" stroke="#a0a0a0" /></Svg>
      <span className="ml-[7px] pt-px">Search</span>
    </div>
    <div className="mt-[9px] flex h-[24px] items-center pl-[17px]">
      <Svg w={6} h={9}><path d="M1 .7L4.700 4.500L1 8.300" stroke="#fff" strokeWidth="1.200" /></Svg>
      <div className="ml-[6px]"><TableGlyph /></div>
      <span className="ml-[6px] pt-[2px]">Bonus Rules</span>
    </div>
    <div className="flex h-[24px] items-center pl-[15px]">
      <Svg w={9} h={6}><path d="M.7 1L4.500 4.700L8.300 1" stroke="#fff" strokeWidth="1.200" /></Svg>
      <div className="relative ml-[5px]">
        <TableGlyph />
        <div className="absolute left-[6px] top-[5px] flex h-[12px] w-[12px] items-center justify-center rounded-full bg-[#0c695a]">
          <Svg w={6} h={5}><path d="M.5 2.500L2.200 4.200L5.500 .8" stroke="#fff" strokeWidth="1.200" /></Svg>
        </div>
      </div>
      <span className="ml-[6px] whitespace-nowrap pt-[2px]">Palmoria Group emp-...</span>
    </div>
    {fields.map(([n, k]) => (
      <div key={n} className="flex h-[24px] items-center pl-[44px]">
        {n === "Employee Belo..." ? (
          <div className="flex h-[12px] w-[12px] items-center justify-center rounded-[2px] border border-[#8fd0c2] bg-[#2bac93]">
            <Svg w={8} h={6}><path d="M.5 3L3 5.200L7.500 .5" stroke="#10463c" /></Svg>
          </div>
        ) : (
          <div className="h-[12px] w-[12px] rounded-[2px] border border-[#b5b5b5]" />
        )}
        <div className="ml-[8px] w-[12px]">{k === "c" ? <CalcGlyph /> : k === "s" ? <SigmaGlyph /> : null}</div>
        <span className="ml-[6px] whitespace-nowrap pt-[2px]">{n}</span>
      </div>
    ))}
  </div>
);

const RightRail = () => (
  <div className="flex w-[32px] shrink-0 flex-col bg-[#292929]">
    <div className="flex h-[32px] items-center justify-center border border-[#6b6b6b] bg-[#333]">
      <Svg w={14} h={18}><path d="M.6 3.200V14.800Q.6 17.300 7 17.300T13.400 14.800V3.200" stroke={W} strokeWidth="1.200" /><ellipse cx="7" cy="3.200" rx="6.400" ry="2.500" stroke={W} strokeWidth="1.200" /></Svg>
    </div>
    <div className="flex h-[32px] items-center justify-center border border-t-0 border-[#6b6b6b] bg-[#333]">
      <Svg w={19} h={20}><path d="M9 18.500H1.500V7.500H6.500V18M6.500 8V1.500H11.500V18M11.500 5.500H16V7" stroke={W} /><path d="M10.500 10V17.500Q10.500 19.300 14.500 19.300T18.500 17.500V10" fill="#333" stroke="#f2b45c" strokeWidth="1.200" /><ellipse cx="14.500" cy="9.500" rx="4" ry="1.700" fill="#333" stroke="#f2b45c" strokeWidth="1.200" /></Svg>
    </div>
    <div className="flex h-[32px] items-center justify-center bg-[#141414]">
      <Svg w={19} h={20}><path d="M5 16.500H1.500V7.500H6.500V14M6.500 8V1.500H11.500V10M11.500 5.500H15" stroke={W} /><path d="M9 13L17.500 5.500L18.500 6.500L11.500 15" fill="#ddd" stroke={W} /><path d="M1.500 18.500Q4.500 18.500 5 15.500Q7 12 10 13.500Q12.500 16 10 18Q7 20.500 1.500 18.500Z" fill={B} stroke={L} strokeWidth=".7" /></Svg>
    </div>
    <div className="flex h-[32px] items-center justify-center bg-[#141414]">
      <Svg w={20}><path d="M11 2.500H18.500V8M11 6.500H15M2.500 13V18.500H11M5 15.500H10M11.500 10.500H19.500L16.500 14V18.500H14V14Z" stroke={W} /><path d="M.7 5Q2 1 6 1Q8.500 1 10.500 4M10.500 .5V4.500H7M10.700 6.500Q9.500 10.500 6 10.500Q3 10.500 1.200 7.500M1 11V7H4.500" stroke="#6fe08a" strokeWidth="1.300" /></Svg>
    </div>
    <div className="flex h-[32px] items-center justify-center bg-[#141414] pb-[2px]">
      <Svg w={17}><path d="M8.500 0V17M0 8.500H17" stroke="#fff" /></Svg>
    </div>
    <div className="mt-auto flex h-[32px] items-center justify-center border-t border-[#6b6b6b] bg-[#141414]">
      <Svg w={20}>
        <path d="M8 1H12L12.700 3.800L15.300 5.200L18 4.200L19.400 7.300L17.500 9.400V10.600L19.400 12.700L18 15.800L15.300 14.800L12.700 16.200L12 19H8L7.300 16.200L4.700 14.800L2 15.800L.6 12.700L2.500 10.600V9.400L.6 7.300L2 4.200L4.700 5.200L7.300 3.800Z" stroke={W} strokeWidth="1.400" strokeLinejoin="round" />
        <circle cx="10" cy="10" r="3" stroke={W} strokeWidth="1.400" />
      </Svg>
    </div>
  </div>
);

const pageTabs: [string, string][] = [
  ["Page 1", "w-[76px] border-[#7a7a7a]"],
  ["Page 2", "w-[76px] border-[#444]"],
  ["Page 3", "w-[78px] border-[#555] border-b-[4px] border-b-[#2bac93] pt-[6px] font-bold"],
  ["Page 4", "w-[77px] border-[#444]"],
];
const PageBar = () => (
  <div className="flex h-[35px] w-[1165px] bg-[#292929] text-[12px] text-white">
    <div className="flex w-[129px] items-start border-l border-[#555] pl-[10px]">
      <div className="flex h-[31px] w-[24px] flex-col items-center border-b-[3px] border-[#2bac93] pt-[7px]">
        <Svg w={17}><rect x="1" y="1" width="15" height="11" rx="1.500" stroke="#fff" strokeWidth="1.500" /><path d="M5 15.500H12M6.500 12.500V15M10.500 12.500V15" stroke="#fff" strokeWidth="1.300" /></Svg>
      </div>
      <Svg w={11} h={18} className="ml-[27px] mt-[6px]"><rect x=".8" y=".8" width="9.400" height="16.400" rx="1.200" stroke="#fff" strokeWidth="1.400" /><path d="M3.500 14.500H7.500" stroke="#fff" /></Svg>
      <Svg w={6} h={9} className="ml-[21px] mt-[14px]"><path d="M5 1V8L1 4.500Z" stroke={W} /></Svg>
      <Svg w={6} h={9} className="ml-[16px] mt-[14px]"><path d="M1 1V8L5 4.500Z" stroke={W} /></Svg>
    </div>
    {pageTabs.map(([t, c]) => (
      <div key={t} className={`flex items-center justify-center border-l pr-px pt-[3px] ${c}`}>{t}</div>
    ))}
    <div className="flex w-[39px] items-center justify-center bg-[#2bac93] pb-[2px]">
      <Svg w={11}><path d="M5.500 0V11M0 5.500H11" stroke="#1c2b28" strokeWidth="3" /></Svg>
    </div>
  </div>
);

const StatusBar = () => (
  <div className="flex h-[25px] shrink-0 items-center border-b border-t border-t-[#6b6b6b] border-b-black bg-[#141414] pl-[4px] pr-[19px] text-[12px] text-[#dcdcdc]">
    <span className="pt-[2px]">Page 3 of 4</span>
    <div className="ml-auto flex items-center">
      <div className="h-[2px] w-[5px] bg-[#dcdcdc]" />
      <Svg w={100} h={12} className="ml-[4px]"><path d="M0 6H100M50.500 3V9" stroke="#cfcfcf" /><rect x="42" y="0" width="4" height="12" fill={W} /></Svg>
      <Svg w={8} className="ml-[6px]"><path d="M4 0V8M0 4H8" stroke={W} /></Svg>
      <span className="ml-[13px] w-[43px]">88%</span>
      <Svg w={14} h={10}><rect x=".5" y=".5" width="13" height="9" rx="1" stroke={W} /><path d="M5 2.500H3V7.500H5M9 2.500H11V7.500H9" stroke={W} /></Svg>
    </div>
  </div>
);

/* ---------- taskbar ---------- */
const Iron = () => (
  <Svg w={24}>
    <path d="M12 0C21 0 24 3 24 12S21 24 12 24S0 21 0 12S3 0 12 0Z" fill="#f3f3f6" />
    <path d="M2 19H22Q20 24 12 24T2 19Z" fill="#d4d5dd" />
    <path d="M7 10.500L18 9.500L20.500 16.500H5Q5 13 7 10.500Z" fill="#2c2f5c" />
    <path d="M5 13L4.500 8Q4.500 6.500 6 6.500L9 7L11 8.500" stroke="#3d4070" strokeWidth="1.200" />
  </Svg>
);
const PowerBi = () => (
  <Svg w={20} h={24}>
    <rect x="10" width="9" height="24" fill="#d98a12" /><rect x="10" width="9" height="12" fill="#e8ab18" />
    <rect x="5.500" y="6" width="8.500" height="18" rx=".6" fill="#efb822" />
    <rect x=".5" y="12" width="8" height="12" rx=".6" fill="#f8dc62" />
  </Svg>
);
const apps: { i: ReactNode; u?: boolean; active?: boolean }[] = [
  { i: <Copilot s={22} id="ct" /> },
  {
    i: (
      <Svg w={22} h={20}>
        <path d="M0 1H9L11 4H22V19H0Z" fill="#e6a117" /><path d="M0 5H22V19H0Z" fill="#fbd469" />
        <path d="M4 19V13Q4 11 6 11H16Q18 11 18 13V19H14V15.500H8V19Z" fill="#2f8fe0" />
      </Svg>
    ), u: true,
  },
  {
    i: (
      <Svg w={24}>
        <circle cx="12" cy="12" r="12" fill="#fbc116" />
        <path d="M12 0A12 12 0 0 1 22.400 6H12L6.800 9L1.600 6A12 12 0 0 1 12 0Z" fill="#e33b2e" />
        <path d="M1.600 6L6.800 15L12 18L10.500 24A12 12 0 0 1 1.600 6Z" fill="#2a9d47" />
        <circle cx="12" cy="12" r="6" fill="#fff" /><circle cx="12" cy="12" r="4.700" fill="#2a73e8" />
      </Svg>
    ), u: true,
  },
  { i: <Iron /> },
  {
    i: (
      <Svg w={24}>
        <path d="M12 0A12 12 0 0 1 12 24H0V12A12 12 0 0 1 12 0Z" fill="#0e7f6e" />
        <path d="M17.500 7.500A7.200 7.200 0 1 0 19 13H13.500" stroke="#fff" strokeWidth="2.400" />
      </Svg>
    ),
  },
  { i: <Iron /> },
  {
    i: (
      <Svg w={24}>
        <path d="M3 3V15Q3 17 9 17T15 14V3Z" fill="#ffd728" /><path d="M9 3H15V14L9 17Z" fill="#f5b800" />
        <ellipse cx="9" cy="3" rx="6" ry="2.400" fill="#efb06a" />
        <path d="M17 1.500H22.500V7M1 17V22.500H7" stroke="#4a9e3f" strokeWidth="2" />
        <path d="M11 13L21 22M20 12L11 22M10 12L13 11M21 13L18 11" stroke="#9a5bc0" strokeWidth="2" />
      </Svg>
    ),
  },
  {
    i: (
      <div className="relative">
        <Svg w={25}>
          <path d="M1.200 23.800L3 17.800A11 11 0 1 1 7 21.800Z" fill="#2b2b2b" stroke="#25d366" strokeWidth="2.200" />
          <path d="M8 7.500Q9.500 6 10.500 8.500T10 11.500Q12 14.500 14 15Q15.500 13.500 16.500 14.500T17.500 17Q15 19 11 16.500T8 7.500Z" fill="#25d366" />
        </Svg>
        <div className="absolute left-[17px] top-[11px] flex h-[16px] w-[16px] items-center justify-center rounded-full border border-[#999] bg-[#2b2b2b] text-[11px] font-semibold text-white">9</div>
      </div>
    ),
  },
  { i: <PowerBi />, u: true, active: true },
  { i: <PowerBi />, u: true },
  {
    i: (
      <div className="flex h-[24px] w-[24px] items-center justify-center bg-[#231f20]">
        <svg width="18" height="20" viewBox="0 0 18 20" fill="#e8e8e8" fontFamily="Lato, sans-serif" letterSpacing="0" className="overflow-visible">
          <text fontSize="17">
            <tspan x="1.500" y="16.500">B</tspan>
            <tspan x="9.500" y="8.500" fontSize="8.500">&amp;</tspan>
            <tspan x="9" y="16.500" fontSize="10">O</tspan>
          </text>
        </svg>
      </div>
    ), u: true,
  },
  {
    i: (
      <Svg w={24}>
        <rect x="6" y="1" width="18" height="22" rx="1" fill="#185c37" />
        <path d="M6 1H15V12H6Z" fill="#21a366" /><path d="M15 1H24V7H15Z" fill="#33c481" /><path d="M15 7H24V12H15Z" fill="#21a366" /><path d="M15 12H24V17H15Z" fill="#107c41" />
        <rect y="6" width="13" height="12" rx="1" fill="#107c41" /><path d="M4 8.500L9 15.500M9 8.500L4 15.500" stroke="#fff" strokeWidth="1.700" />
      </Svg>
    ), u: true,
  },
];

const Taskbar = () => (
  <div className="flex h-[40px] shrink-0 bg-[#2b2b2b] text-white">
    <div className="flex w-[48px] items-center justify-center">
      <Svg w={16}><path d="M0 2.300L6.500 1.400V7.500H0ZM7.300 1.300L16 0V7.500H7.300ZM0 8.400H6.500V14.600L0 13.700ZM7.300 8.400H16V16L7.300 14.700Z" fill="#fff" /></Svg>
    </div>
    <div className="flex w-[288px] items-center border border-[#666] bg-[#343434] pl-[11px] pr-[9px] text-[14.5px] text-[#d8d8d8]">
      <Svg w={17}><circle cx="10.500" cy="6.500" r="5.500" stroke="#e8e8e8" strokeWidth="1.200" /><path d="M6.500 10.500L.7 16.300" stroke="#e8e8e8" strokeWidth="1.300" /></Svg>
      <span className="ml-[11px] whitespace-nowrap pt-px">Type here to search</span>
      <Svg w={56} h={36} className="ml-auto">
        <path d="M0 12L14 1L35 6V27L2 35L0 33Z" fill="#8a4a33" />
        <path d="M0 12L14 1L35 6L2 14Z" fill="#b5724f" />
        <path d="M1 14L34 7M1 24L34 17" stroke="#d9a27d" strokeWidth="2" />
        <path d="M2 15V35L0 33V12Z" fill="#c78a66" />
        <path d="M39 16Q48 11 54 17T55 26Q48 32 40 28Z" fill="#a5694b" />
        <path d="M30 29Q30 19 39 19T49 29Q48 36 39 36T30 29Z" fill="#9a5a3c" />
        <path d="M31 25Q39 16 48 25L45 23L42 26L38 22L35 26Z" fill="#c98f70" />
        <path d="M40 18L45 15L47 18L51 14" stroke="#f2dccb" strokeWidth="1.200" />
      </Svg>
    </div>
    <div className="ml-[2px] flex">
      {apps.map((a, i) => (
        <div key={i} className={`flex h-[40px] w-[49px] flex-col items-center ${a.active ? "bg-[#555]" : ""}`}>
          <div className="flex h-[38px] items-center justify-center pt-[2px]">{a.i}</div>
          {a.u && <div className={`h-[2px] bg-[#a8dcf8] ${a.active ? "w-[49px]" : "w-[40px]"}`} />}
        </div>
      ))}
    </div>
    <div className="ml-auto flex items-center pr-[4px]">
      <Svg w={25} className="mr-[8px]">
        <circle cx="13" cy="13" r="11" fill="#f28c1e" />
        <path d="M2 10Q0 5 4 4Q7 0 11 3Q14 5 13 10Z" fill="#b9d0f5" />
        <path d="M12 22Q11 17 15 17Q18 14 21 16.500Q26 18 24 22Z" fill="#b9d0f5" />
        <circle cx="18" cy="6" r="6" fill="#d02a20" />
        <text x="18" y="9.500" fontSize="9.500" textAnchor="middle" fill="#fff" fontFamily="Open Sans, sans-serif">1</text>
      </Svg>
      <span className="w-[38px] text-[14px] tracking-[-0.35px]">23°C</span>
      <span className="w-[99px] whitespace-nowrap text-[14px] tracking-[-0.5px]">Partly sunny</span>
      <Svg w={13} h={8}><path d="M1 7L6.500 1.500L12 7" stroke="#fff" strokeWidth="1.200" /></Svg>
      <Svg w={13} className="ml-[12px]"><path d="M1 12.500Q1 1 12.500 1M4 12.500Q4 4.500 12.500 4.500M7 12.500Q7 8 12.500 8M10 12.500V11H12.500" stroke={W} strokeWidth="1.200" /></Svg>
      <div className="ml-[11px] flex w-[48px] flex-col items-center whitespace-nowrap text-[12px] leading-[18px]">
        <span>8:25 AM</span>
        <span>7/7/2025</span>
      </div>
      <div className="relative ml-[21px] mr-[20px]">
        <Svg w={16} h={16}><path d="M0 0H16V11H9L6 15V11H0Z" fill="#fff" /><path d="M3 3H13M3 5.500H13M3 8H10" stroke="#2b2b2b" /></Svg>
        <div className="absolute left-[8px] top-[7px] flex h-[16px] w-[16px] items-center justify-center rounded-full border border-[#999] bg-[#2b2b2b] text-[11px] font-semibold">5</div>
      </div>
      <div className="h-[40px] w-px bg-[#777]" />
    </div>
  </div>
);

export default function App() {
  return (
    <div className="flex h-[900px] w-[1600px] flex-col overflow-hidden bg-[#141414] tracking-[-0.25px] [font-family:'Open_Sans',sans-serif] [font-stretch:93%]">
      <TitleBar />
      <Tabs />
      <Ribbon />
      <div className="flex h-[665px] shrink-0">
        <div className="flex w-[1205px] shrink-0">
          <LeftRail />
          <div className="flex w-[1165px] shrink-0 flex-col">
            <div className="flex h-[630px]">
              <div className="w-[7px] shrink-0 border-l border-[#444] bg-gradient-to-r from-[#1c1c1c] via-[#3a3a3a] to-[#666]" />
              <Canvas />
              <div className="w-[6px] shrink-0 border-r border-[#7a7a7a] bg-gradient-to-r from-[#4a4a4a] to-[#262626]" />
              <div className="flex w-[32px] shrink-0 flex-col items-center bg-[#3b3b3b] pt-[15px]">
                <Dbl flip w={1.9} />
                <Svg w={11} h={12} className="ml-[6px] mt-[18px]"><path d="M9.500 .5V11M6.500 2.500V9.500M3.500 4V8M1 5.500V6.500" stroke="#fff" strokeWidth="1.700" /></Svg>
                <span className="mt-[8px] text-[14px] font-bold leading-[18px] text-white [writing-mode:vertical-rl]">Filters</span>
              </div>
            </div>
            <PageBar />
          </div>
        </div>
        <div className="w-px shrink-0 bg-[#6b6b6b]" />
        <BuildPane />
        <DataPane />
        <RightRail />
      </div>
      <StatusBar />
      <Taskbar />
    </div>
  );
}
